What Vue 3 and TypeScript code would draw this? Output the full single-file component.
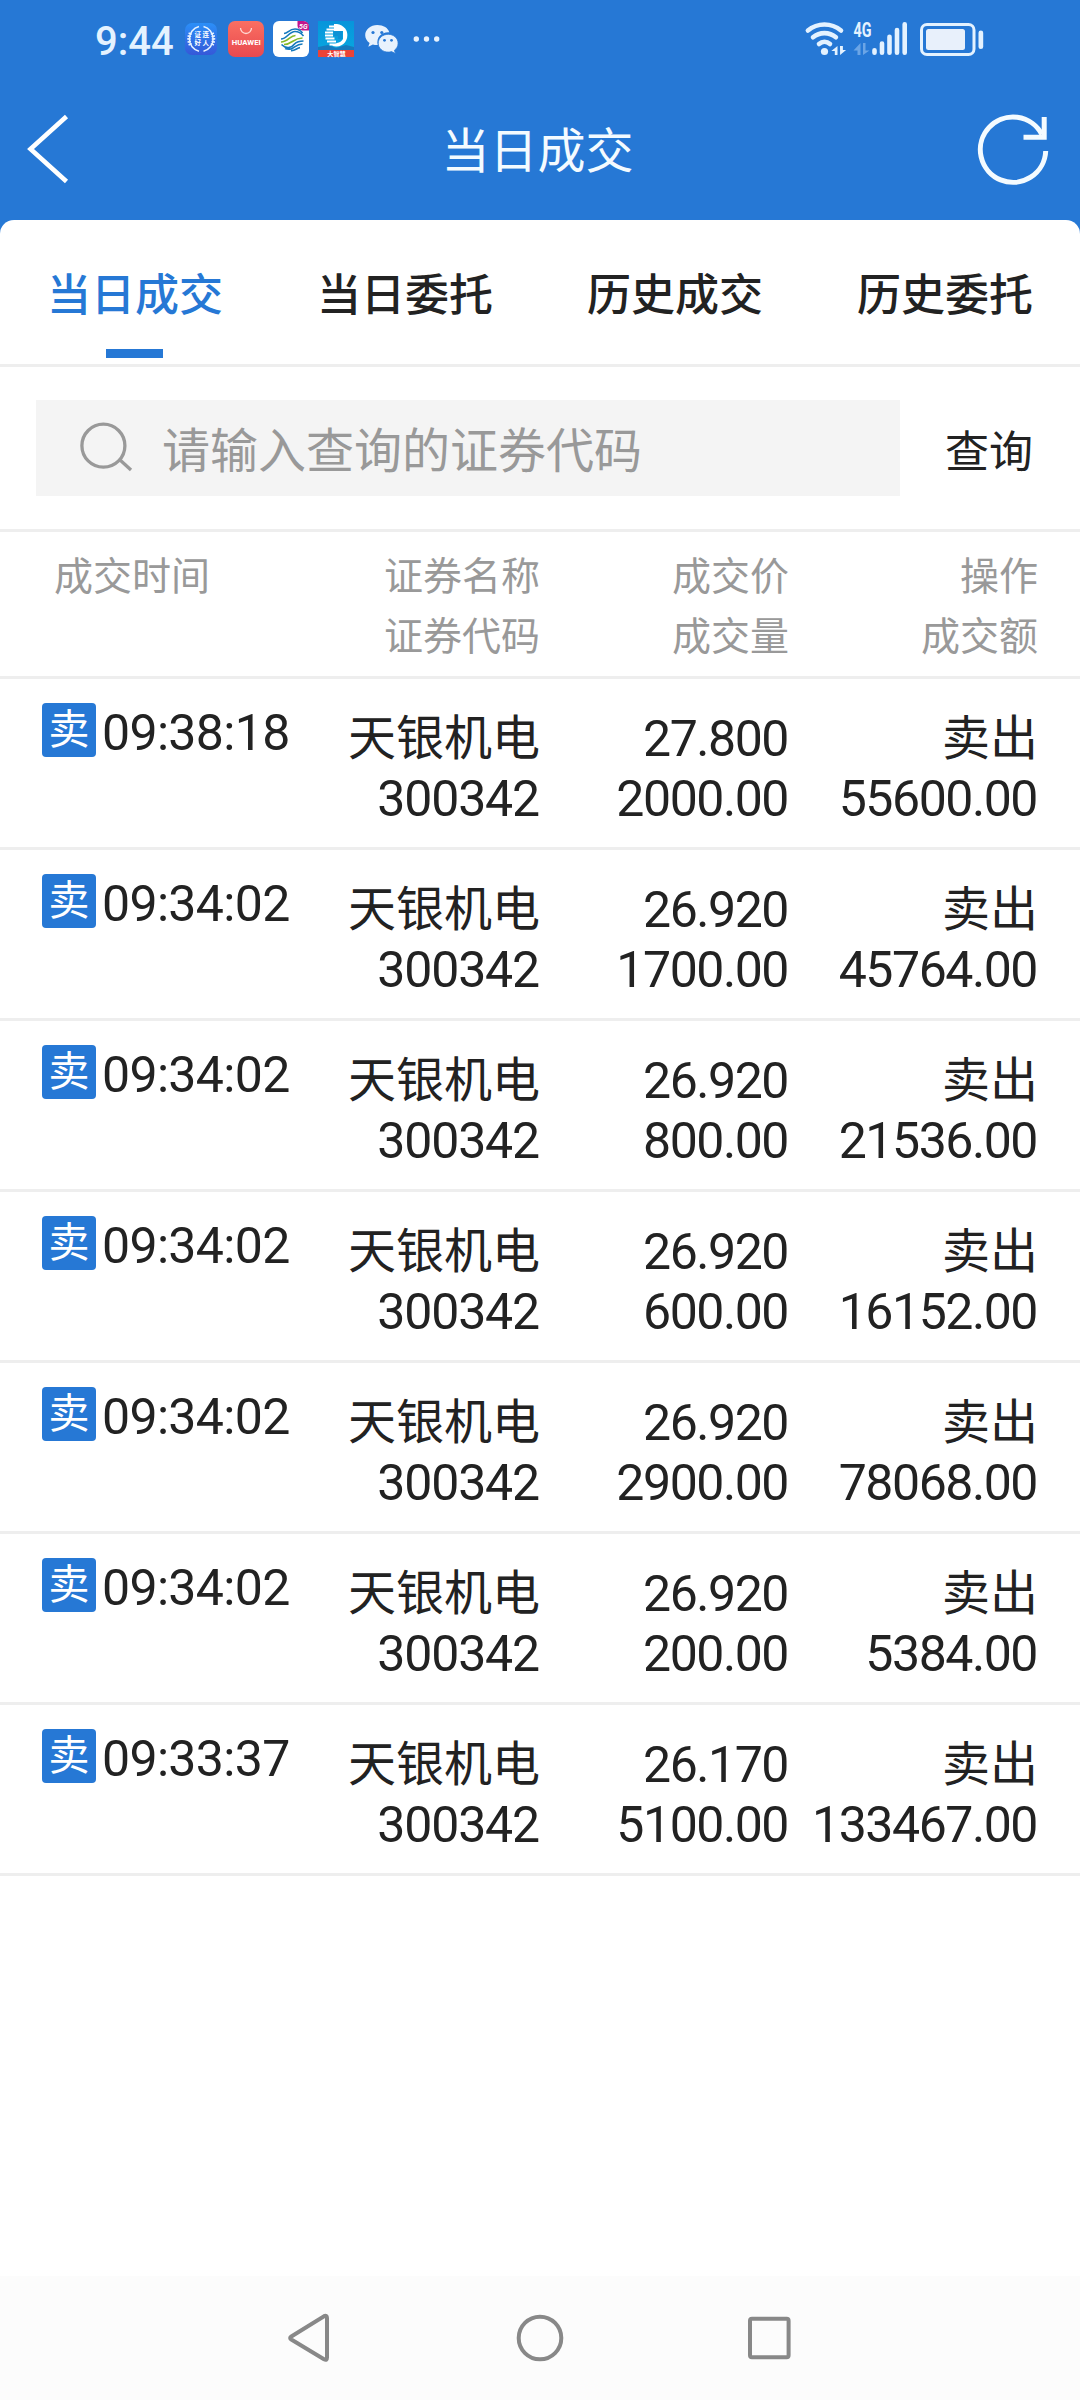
<script setup lang="ts">
interface Trade {
  time: string
  name: string
  code: string
  price: string
  volume: string
  side: string
  amount: string
}

const tabs: string[] = ['当日成交', '当日委托', '历史成交', '历史委托']
const activeTab = 0

const sell = (time: string, price: string, volume: string, amount: string): Trade => ({
  time, name: '天银机电', code: '300342', price, volume, side: '卖出', amount,
})

const trades: Trade[] = [
  sell('09:38:18', '27.800', '2000.00', '55600.00'),
  sell('09:34:02', '26.920', '1700.00', '45764.00'),
  sell('09:34:02', '26.920', '800.00', '21536.00'),
  sell('09:34:02', '26.920', '600.00', '16152.00'),
  sell('09:34:02', '26.920', '2900.00', '78068.00'),
  sell('09:34:02', '26.920', '200.00', '5384.00'),
  sell('09:33:37', '26.170', '5100.00', '133467.00'),
]
</script>

<template>
  <div class="screen">
    <header class="top">
      <div class="status">
        <span class="clock">9:44</span>
        <svg class="apps" width="260" height="80" viewBox="180 0 260 80">
          <defs>
            <linearGradient id="g1" x1="0" y1="0" x2="0" y2="1"><stop offset="0" stop-color="#2b8ff8" /><stop offset="1" stop-color="#3558d8" /></linearGradient>
            <linearGradient id="g2" x1="0" y1="0" x2="0" y2="1"><stop offset="0" stop-color="#fa6f62" /><stop offset="1" stop-color="#e8494f" /></linearGradient>
            <linearGradient id="g3" x1="0" y1="0" x2="0" y2="1"><stop offset="0" stop-color="#0795db" /><stop offset="1" stop-color="#08a9e0" /></linearGradient>
          </defs>
          <rect x="185" y="23" width="32" height="32" rx="7" fill="url(#g1)" />
          <g fill="none" stroke="#e6f2ff">
            <path d="M199 26.500A12.800 12.800 0 0 0 199 51.300M203.500 26.500A12.800 12.800 0 0 1 203.500 51.300" stroke-width="1.500" />
            <path d="M190.500 33A12.800 12.800 0 0 0 190.500 45M212 33A12.800 12.800 0 0 1 212 45" stroke-width="3.500" stroke-dasharray="1.500 1.200" />
          </g>
          <g fill="#fff" font-size="6.500" font-weight="700">
            <text x="194.500" y="37">证</text><text x="202.500" y="37">连</text>
            <text x="194.500" y="45">好</text><text x="202.500" y="45">人</text>
          </g>
          <rect x="228" y="21" width="36" height="36" rx="7" fill="url(#g2)" />
          <path d="M240.500 28a5.500 5.500 0 0 0 11 0" fill="none" stroke="#ffd9d4" stroke-width="1.300" />
          <text x="246.300" y="44.600" font-size="6.800" font-weight="700" fill="#fff" text-anchor="middle" textLength="29" lengthAdjust="spacingAndGlyphs">HUAWEI</text>
          <rect x="273" y="21" width="36" height="36" rx="6" fill="#fff" />
          <path d="M297.500 21h6a5.500 5.500 0 0 1 5.500 5.500v4h-6.500a5 5 0 0 1-5-5z" fill="#c5158c" />
          <text x="303.300" y="28.500" font-size="7" font-style="italic" font-weight="700" fill="#fff" text-anchor="middle">5G</text>
          <g fill="none" stroke-width="1.700">
            <path d="M284 33.500c4 0 5-4.500 11-4.500 4 0 6 2 7.500 4M281 39c6 0 8-7.500 14-7.500 4 0 6 1.500 8.500 4.500" stroke="#1479bd" />
            <path d="M281 42c7 0 9-6.500 14.500-6.500M284 44.500c8 0 9-6.500 18.500-6.500" stroke="#85b92b" />
            <path d="M281.500 44.500c6 6 11 2 13-.5 2-2 4-3 9-3M285 48.500c9 3 9-4.500 17.500-4.500M291 50.700c4 .3 6-2.700 9-3" stroke="#1479bd" />
          </g>
          <rect x="318" y="21" width="36" height="36" fill="url(#g3)" />
          <path d="M318 47l10-2 8 3 10-3 8 2v4h-36z" fill="#1779bd" />
          <path d="M337 24a11.300 11.300 0 1 1-5 21.800l5-2.800a8 8 0 0 0 6-4v-8h-9v-7z" fill="#fff" />
          <path d="M329 26.500h7M326.500 29.500h8M325 32.500h8M325 35.500h8M325.500 38.500h9M327 41.500h9M329.500 44.500h7" stroke="#fff" stroke-width="1.800" />
          <path d="M334 31h8v8h-4v-3h-4z" fill="#0b91d5" />
          <path d="M318 50h36v7h-36z" fill="#ea4338" />
          <text x="336.500" y="56" font-size="6.200" font-weight="700" fill="#fff" text-anchor="middle">大智慧</text>
          <path fill="#e8f2fd" d="M377.300 25c-6.700 0-12.100 4.500-12.100 10.200 0 3.100 1.700 5.900 4.400 7.800l-1.300 3.800 4.600-2.300c1.500.4 3 .6 4.900.5-2-8 4.500-13.300 11.500-12.600-1-4.400-6-7.400-12-7.400z" />
          <path fill="#e8f2fd" d="M388.200 34.300c-5.600 0-10 3.900-10 8.900s4.400 8.900 10 8.900c1.200 0 2.300-.1 3.300-.5l4 2-1.100-3.300c2.300-1.600 3.700-4.100 3.700-7.100 0-5-4.400-8.900-9.900-8.900z" stroke="#2778d5" stroke-width=".8" />
          <g fill="#2778d5"><circle cx="373" cy="32.500" r="1.600" /><circle cx="381.800" cy="32.500" r="1.600" /><circle cx="384.500" cy="40.300" r="1.400" /><circle cx="391.500" cy="40.300" r="1.400" /></g>
          <g fill="#e8f2fd"><circle cx="416.300" cy="39" r="2.700" /><circle cx="426.500" cy="39" r="2.700" /><circle cx="436.700" cy="39" r="2.700" /></g>
        </svg>
        <svg class="system" width="190" height="80" viewBox="800 0 190 80">
          <g fill="none" stroke="#e4f2ff" stroke-linecap="round" stroke-width="4.600">
            <path d="M807.900 30.500c9.800-8 23.300-8 33.100 0" />
            <path d="M813 37.300c6.600-5.600 16.300-5.600 22.900 0" />
            <path d="M819 44c3.300-3 7.700-3 11 0" />
          </g>
          <circle cx="824.500" cy="51.500" r="3.600" fill="#e4f2ff" />
          <path d="M831.300 51l6.200-5v9h-2.700v-4zM840 46l.1 9 6-5h-3.200v-4z" fill="#e4f2ff" />
          <text x="853.500" y="36.800" font-family="Roboto, sans-serif" font-size="20" font-weight="700" fill="#e4f2ff" textLength="18" lengthAdjust="spacingAndGlyphs">4G</text>
          <path d="M853.500 50.500l7-7.500v12h-3v-4.500zM863 43h2.500v7.500h4l-6.500 4.500z" fill="#6ba5e6" />
          <g stroke="#e4f2ff" stroke-width="4.600" stroke-linecap="round">
            <path d="M874.500 50.300v2.400M882 43.500v9.200M889.500 36.800v15.900M897 30v22.700M904.700 24.300v28.400" />
          </g>
          <rect x="921.500" y="24.500" width="52.500" height="30" rx="5.500" fill="none" stroke="#e4f2ff" stroke-width="3" />
          <rect x="926" y="29" width="39" height="21" rx="2.500" fill="#e8f0fb" />
          <rect x="978.500" y="30.500" width="4.700" height="18.500" rx="2.300" fill="#e4f2ff" />
        </svg>
      </div>
      <div class="titlebar">
        <svg width="60" height="80" viewBox="21 110 60 80">
          <path d="M66.500 116.500L30.500 149l36 32.500" fill="none" stroke="#fff" stroke-width="4.600" />
        </svg>
        <h1>当日成交</h1>
        <svg width="80" height="80" viewBox="973 110 80 80">
          <path d="M1045.700 151A32.700 32.700 0 1 1 1042 134.500" fill="none" stroke="#f4fbff" stroke-width="5" />
          <path d="M1044.200 117v20.300H1023.500" fill="none" stroke="#f4fbff" stroke-width="5" />
        </svg>
      </div>
    </header>

    <main class="card">
      <nav class="tabs">
        <div v-for="(tab, i) in tabs" :key="tab" class="tab" :class="{ active: i === activeTab }">
          <span>{{ tab }}</span>
        </div>
      </nav>

      <section class="search">
        <div class="field">
          <svg width="56" height="56" viewBox="78 420 56 56">
            <circle cx="103.400" cy="445.700" r="21.500" fill="none" stroke="#999" stroke-width="3.300" />
            <path d="M119.500 459.500L131 470" stroke="#999" stroke-width="3.300" />
          </svg>
          <span>请输入查询的证券代码</span>
        </div>
        <span class="query">查询</span>
      </section>

      <div class="grid head">
        <div>成交时间</div>
        <div class="r">证券名称<br />证券代码</div>
        <div class="r">成交价<br />成交量</div>
        <div class="r">操作<br />成交额</div>
      </div>

      <div v-for="(t, i) in trades" :key="i" class="grid row">
        <div class="when"><i class="badge">卖</i><span class="time">{{ t.time }}</span></div>
        <div class="r"><p class="zh">{{ t.name }}</p><p class="code">{{ t.code }}</p></div>
        <div class="r"><p>{{ t.price }}</p><p>{{ t.volume }}</p></div>
        <div class="r"><p class="zh">{{ t.side }}</p><p>{{ t.amount }}</p></div>
      </div>
    </main>

    <footer class="navbar">
      <svg width="540" height="60" viewBox="270 2308 540 60" fill="none" stroke="#888" stroke-width="4">
        <path d="M291.300 2336.500L324 2316.200Q327 2315 327 2318V2357.500Q327 2361 324 2359.300L291.300 2339.500Q289 2338 291.300 2336.500Z" />
        <circle cx="540" cy="2338" r="21.300" />
        <rect x="750" y="2318.700" width="38.600" height="38.600" rx="2" />
      </svg>
    </footer>
  </div>
</template>

<style>
body {
  margin: 0;
  background: #fff;
}
</style>

<style scoped>
.screen {
  display: flex;
  flex-direction: column;
  width: 1080px;
  height: 2400px;
  background: #2678d5;
  color: #222;
  font-family: Roboto, "Noto Sans CJK SC", sans-serif;
  overflow: hidden;
}
.top {
  height: 220px;
  flex: none;
  color: #f4fbff;
}
.status {
  display: flex;
  height: 80px;
}
.clock {
  width: 85px;
  padding-left: 95px;
  font-size: 40px;
  font-weight: 500;
  line-height: 83px;
  color: #e4f2ff;
}
.system {
  margin-left: 360px;
}
.titlebar {
  display: flex;
  align-items: center;
  justify-content: space-between;
  height: 140px;
  padding: 0 27px 0 21px;
}
h1 {
  margin: 4px 0 0 21px;
  font-size: 48px;
  font-weight: 400;
  line-height: 60px;
}
.card {
  flex: 1;
  background: #fff;
  border-radius: 14px 14px 0 0;
}
.tabs {
  display: flex;
  height: 144px;
  border-bottom: 3px solid #eee;
}
.tab {
  display: flex;
  flex-direction: column;
  align-items: center;
  justify-content: space-between;
  width: 270px;
  height: 138px;
  font-size: 44px;
  font-weight: 500;
}
.tab span {
  height: 129px;
  line-height: 152px;
}
.tab.active {
  color: #2678d5;
}
.tab.active::after {
  content: "";
  width: 57px;
  height: 9px;
  margin-right: 1px;
  background: #2678d5;
}
.search {
  display: flex;
  align-items: center;
  height: 162px;
  padding-left: 36px;
  border-bottom: 3px solid #eee;
}
.field {
  display: flex;
  align-items: center;
  width: 822px;
  height: 96px;
  padding-left: 42px;
  background: #f4f4f4;
  color: #999;
  font-size: 48px;
}
.field span {
  margin: -3px 0 0 28px;
}
.query {
  margin: 1px 0 0 45px;
  font-size: 44px;
}
.grid {
  display: grid;
  grid-template-columns: 300px 240px 249px 249px;
  border-bottom: 3px solid #eee;
}
.r {
  text-align: right;
}
.head {
  height: 129px;
  padding-top: 15px;
  color: #999;
  font-size: 39px;
  line-height: 60px;
}
.head div:first-child {
  padding-left: 54px;
}
.row {
  height: 138px;
  padding-top: 30px;
  font-size: 50px;
  line-height: 60px;
}
p {
  margin: 0;
  padding-right: 1px;
  letter-spacing: -1.450px;
  white-space: nowrap;
}
.code {
  letter-spacing: -1.150px;
}
.zh {
  padding-right: 0;
  font-size: 48px;
  letter-spacing: 0;
}
.when {
  display: flex;
  align-items: flex-start;
  padding-left: 42px;
}
.badge {
  width: 54px;
  height: 54px;
  margin-top: -6px;
  border-radius: 4px;
  background: #2678d5;
  color: #fff;
  font-size: 41px;
  font-style: normal;
  line-height: 55px;
  text-align: center;
}
.time {
  margin: -6px 0 0 6px;
  letter-spacing: -0.650px;
}
.navbar {
  display: flex;
  align-items: center;
  justify-content: center;
  height: 124px;
  flex: none;
  background: #fcfcfc;
}
</style>
